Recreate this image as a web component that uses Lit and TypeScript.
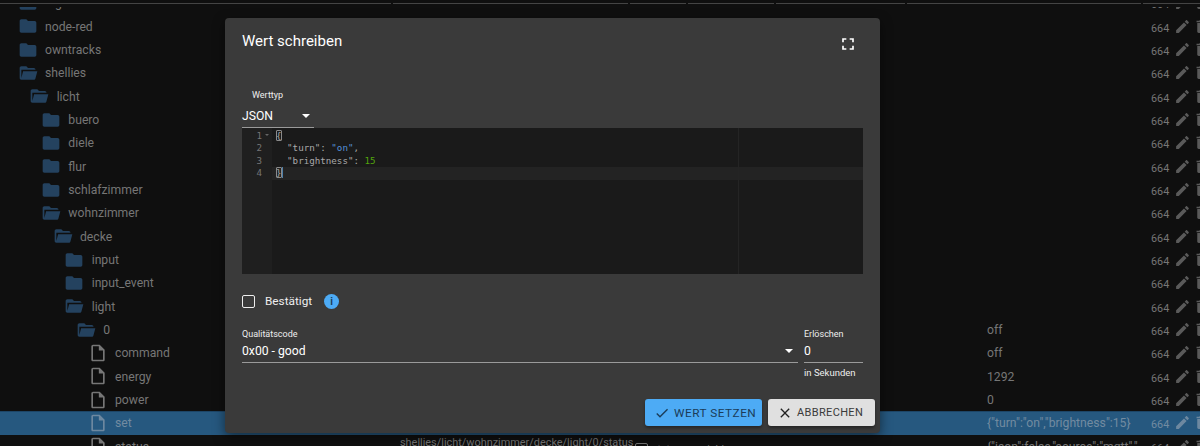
import { LitElement, html, css, svg } from "lit";
import { customElement } from "lit/decorators.js";

const P = {
  folder: "M10 4H4c-1.1 0-1.99.9-1.99 2L2 18c0 1.1.9 2 2 2h16c1.1 0 2-.9 2-2V8c0-1.1-.9-2-2-2h-8l-2-2z",
  open: "M19 20H4C2.89 20 2 19.1 2 18V6C2 4.89 2.89 4 4 4H10L12 6H19C20.1 6 21 6.9 21 8H21L4 8V18L6.14 10H23.21L20.93 18.5C20.7 19.37 19.92 20 19 20Z",
  file: "M14 2H6c-1.1 0-1.99.9-1.99 2L4 20c0 1.1.89 2 1.99 2H18c1.1 0 2-.9 2-2V8l-6-6zM6 20V4h7v5h5v11H6z",
  pencil: "M3 17.25V21h3.75L17.81 9.94l-3.75-3.75L3 17.25zM20.71 7.04c.39-.39.39-1.02 0-1.41l-2.34-2.34c-.39-.39-1.02-.39-1.41 0l-1.83 1.83 3.75 3.75 1.83-1.83z",
  trash: "M6 19c0 1.1.9 2 2 2h8c1.1 0 2-.9 2-2V7H6v12zM19 4h-3.5l-1-1h-5l-1 1H5v2h14V4z",
  full: "M7 14H5v5h5v-2H7v-3zm-2-4h2V7h3V5H5v5zm12 7h-3v2h5v-5h-2v3zM14 5v2h3v3h2V5h-5z",
  check: "M9 16.17 4.83 12l-1.42 1.41L9 19 21 7l-1.41-1.41z",
  close: "M19 6.41 17.59 5 12 10.59 6.41 5 5 6.41 10.59 12 5 17.59 6.41 19 12 13.41 17.59 19 19 17.59 13.41 12z",
};

const icon = (d: string, cls: string) =>
  html`<svg class=${cls} viewBox="0 0 24 24">${svg`<path d=${d}></path>`}</svg>`;

type Row = { n: string; d: number; k: "folder" | "open" | "file"; v?: string; sel?: boolean; path?: boolean };

const rows: Row[] = [
  { n: "logic", d: 0, k: "folder" },
  { n: "node-red", d: 0, k: "folder" },
  { n: "owntracks", d: 0, k: "folder" },
  { n: "shellies", d: 0, k: "open" },
  { n: "licht", d: 1, k: "open" },
  { n: "buero", d: 2, k: "folder" },
  { n: "diele", d: 2, k: "folder" },
  { n: "flur", d: 2, k: "folder" },
  { n: "schlafzimmer", d: 2, k: "folder" },
  { n: "wohnzimmer", d: 2, k: "open" },
  { n: "decke", d: 3, k: "open" },
  { n: "input", d: 4, k: "folder" },
  { n: "input_event", d: 4, k: "folder" },
  { n: "light", d: 4, k: "open" },
  { n: "0", d: 5, k: "open", v: "off" },
  { n: "command", d: 6, k: "file", v: "off" },
  { n: "energy", d: 6, k: "file", v: "1292" },
  { n: "power", d: 6, k: "file", v: "0" },
  { n: "set", d: 6, k: "file", v: '{"turn":"on","brightness":15}', sel: true },
  { n: "status", d: 6, k: "file", v: '{"ison":false,"source":"mqtt","', path: true },
];

const seps = [393, 237, 58, 88, 131, 236];

@customElement("app-root")
export class AppRoot extends LitElement {
  static styles = css`
    :host { display: block; position: relative; width: 1200px; height: 446px; overflow: hidden; background: #0f0f0f; font-family: Roboto, sans-serif; }
    .head { position: relative; z-index: 1; height: 7px; background: #0f0f0f; display: flex; padding-top: 3px; box-sizing: border-box; }
    .seg { height: 1px; margin-right: 2px; background: #444; }
    .seg.last { flex: 1; margin-right: 0; }
    .list { margin-top: -15.7px; }
    .row { height: 23.33px; display: grid; grid-template-columns: 400px 235px 58px 294px 164px 23px 1fr; align-items: center; color: #767676; font-size: 12.2px; white-space: nowrap; overflow: hidden; }
    .row.sel { background: #26587f; color: #728ba1; box-shadow: inset 0 1px 0 #1d4566; }
    .tree { display: flex; align-items: center; gap: 7.5px; }
    .tree span { padding-top: 1px; }
    .ic { width: 20px; height: 20px; flex: none; }
    .ic.folder, .ic.open { fill: #24425f; }
    .ic.file { fill: #767676; }
    .sel .ic.file, .sel .act { fill: #6d88a0; }
    .val { overflow: hidden; padding-top: 1px; }
    .path { font-size: 10.9px; padding-bottom: 8px; }
    .perm { font-size: 10.8px; padding-top: 4px; }
    .tools { display: flex; gap: 2px; }
    .act { width: 17px; height: 17px; fill: #5a5a5a; flex: none; display: block; }
    .small { font-size: 10.5px; display: flex; align-items: center; gap: 4px; padding-top: 6px; }
    .box { width: 11px; height: 10px; border: 1px solid #767676; border-radius: 2px; }

    .modal { position: absolute; left: 225px; top: 18px; width: 655px; height: 415px; box-sizing: border-box; padding: 0 17px; background: #3a3a3a; border-radius: 4px; z-index: 2; box-shadow: 0 4px 12px rgba(0, 0, 0, .5); font-family: Roboto, sans-serif; color: #fff; display: flex; flex-direction: column; }
    .title { height: 46px; display: flex; align-items: center; justify-content: space-between; font-size: 15px; }
    .title svg { width: 20px; height: 20px; fill: #fff; margin: 6px 5px 0 0; }
    .lbl { font-size: 9px; line-height: 12px; color: #eee; }
    .type-lbl { margin: 25px 0 0 10px; }
    .select { display: flex; align-items: center; justify-content: space-between; box-sizing: border-box; font-size: 12.2px; border-bottom: 1px solid #9a9a9a; }
    .type { width: 72px; height: 24px; margin-top: 3px; padding: 1px 4px 0 0; }
    .arrow { width: 0; height: 0; border: 4px solid transparent; border-top-color: #fff; border-bottom: 0; }
    .editor { height: 146px; background: #1a1a1a; display: flex; font: 9.2px/12.4px "DejaVu Sans Mono", monospace; color: #a9a9a9; position: relative; }
    .gutter { width: 30px; background: #1f1f1f; flex: none; color: #757575; text-align: right; padding: 2px 10px 0 0; box-sizing: border-box; position: relative; }
    .fold { position: absolute; left: 23px; top: 6px; width: 0; height: 0; border: 2px solid transparent; border-top-color: #666; border-bottom: 0; }
    .code { flex: 1; padding: 2px 0 0 4px; position: relative; }
    .line { height: 12.4px; white-space: pre; position: relative; }
    .active { background: #232323; margin-left: -4px; padding-left: 4px; }
    .br { outline: 1px solid #8a8a8a; outline-offset: -1px; border-radius: 1px; }
    .str { color: #5590d8; }
    .num { color: #52a50c; }
    .cursor { display: inline-block; width: 1px; height: 11px; background: #4f7fa8; vertical-align: -2px; }
    .vline { position: absolute; left: 496px; top: 0; bottom: 0; width: 1px; background: #242424; }
    .confirm { display: flex; align-items: center; height: 28px; margin-top: 13px; font-size: 11.8px; color: #eee; }
    .cb { width: 11px; height: 11px; border: 1.5px solid #eee; border-radius: 2px; margin: 0 10px 0 0; }
    .info { width: 15px; height: 15px; border-radius: 50%; background: #4dabf5; color: #1c3a55; display: flex; align-items: center; justify-content: center; margin-left: 12px; font: 700 10px "Liberation Sans", sans-serif; }
    .quality { display: grid; grid-template-columns: 556px 59px; column-gap: 6px; margin-top: 13px; }
    .field .select { height: 23px; padding-bottom: 1px; }
    .field .select.q { padding-right: 5px; }
    .hint { font-size: 9.5px; line-height: 12px; color: #eee; margin-top: 4px; }
    .actions { display: flex; justify-content: flex-end; gap: 6px; margin: 20px -12px 0 0; }
    .btn { height: 27px; display: flex; align-items: center; box-sizing: border-box; border-radius: 3px; letter-spacing: .5px; box-shadow: 0 2px 3px rgba(0, 0, 0, .35); }
    .btn svg { width: 16px; height: 16px; margin-right: 4px; }
    .ok { width: 117px; background: #4dabf5; color: #1b3c58; padding-left: 9px; font-size: 11.8px; }
    .ok svg { fill: #1b3c58; }
    .no { width: 107px; background: #e0e0e0; color: #3a3a3a; padding-left: 9px; font-size: 11px; letter-spacing: .35px; }
    .no svg { fill: #222; }
  `;

  render() {
    return html`
      <div class="head">
        ${seps.map((w) => html`<div class="seg" style="width:${w - 2}px"></div>`)}
        <div class="seg last"></div>
      </div>
      <div class="list">
        ${rows.map(
          (r) => html`<div class="row ${r.sel ? "sel" : ""}">
            <div class="tree" style="padding-left:${17.5 + r.d * 11.67}px">${icon(P[r.k], "ic " + r.k)}<span>${r.n}</span></div>
            <div class="path">${r.path ? "shellies/licht/wohnzimmer/decke/light/0/status" : ""}</div>
            <div class="small">${r.path ? html`<span class="box"></span><span>state</span>` : ""}</div>
            <div class="small">${r.path ? "variable" : ""}</div>
            <div class="val">${r.v ?? ""}</div>
            <div class="perm">664</div>
            <div class="tools">${icon(P.pencil, "act")}${icon(P.trash, "act")}</div>
          </div>`
        )}
      </div>
      <div class="modal">
        <div class="title"><span>Wert schreiben</span>${icon(P.full, "")}</div>
        <div class="lbl type-lbl">Werttyp</div>
        <div class="select type"><span>JSON</span><i class="arrow"></i></div>
        <div class="editor">
          <div class="gutter">
            <div>1</div><div>2</div><div>3</div><div>4</div><i class="fold"></i>
          </div>
          <div class="code">
            <div class="line"><span class="br">{</span></div>
            <div class="line">  "turn": <span class="str">"on"</span>,</div>
            <div class="line">  "brightness": <span class="num">15</span></div>
            <div class="line active"><span class="br">}</span><i class="cursor"></i></div>
          </div>
          <div class="vline"></div>
        </div>
        <div class="confirm"><i class="cb"></i><span>Bestätigt</span><span class="info">i</span></div>
        <div class="quality">
          <div class="field">
            <div class="lbl">Qualitätscode</div>
            <div class="select q"><span>0x00 - good</span><i class="arrow"></i></div>
          </div>
          <div class="field">
            <div class="lbl">Erlöschen</div>
            <div class="select"><span>0</span></div>
            <div class="hint">in Sekunden</div>
          </div>
        </div>
        <div class="actions">
          <div class="btn ok">${icon(P.check, "")}<span>WERT SETZEN</span></div>
          <div class="btn no">${icon(P.close, "")}<span>ABBRECHEN</span></div>
        </div>
      </div>
    `;
  }
}
